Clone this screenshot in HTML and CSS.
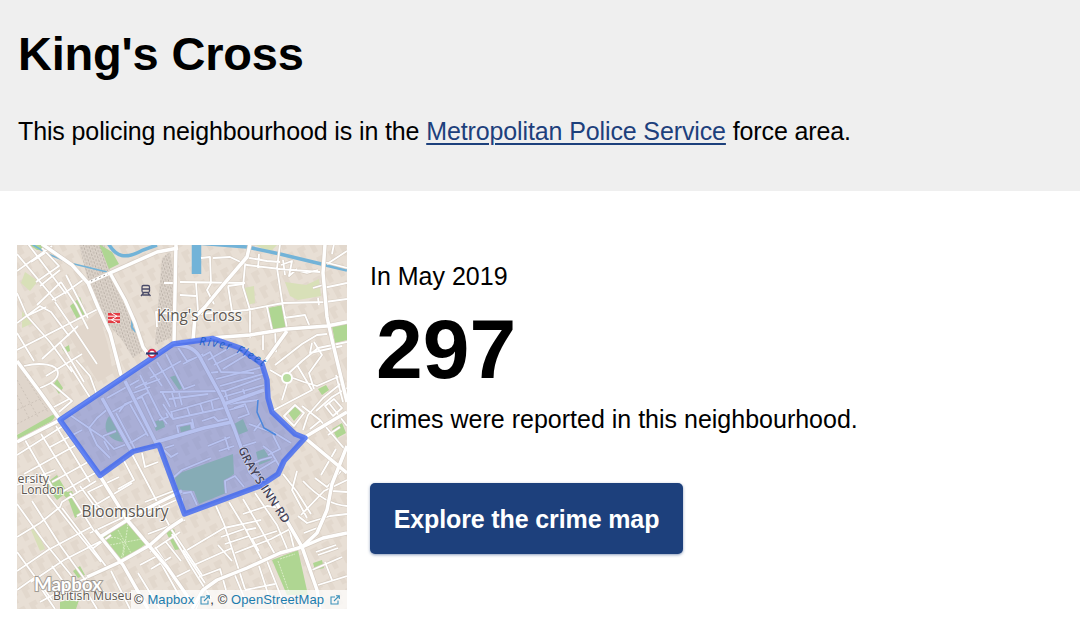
FILE: index.html
```html
<!DOCTYPE html>
<html lang="en">
<head>
  <meta charset="UTF-8">
  <title>King's Cross</title>
  <link rel="stylesheet" href="styles.css">
</head>
<body>
  <header class="page-header">
    <h1>King's Cross</h1>
    <p>This policing neighbourhood is in the <a href="#">Metropolitan Police Service</a> force area.</p>
  </header>

  <div class="main-contents">
    <div class="map">
      <svg class="map-tiles" viewBox="17 245 330 364">
        <defs>
          <pattern id="rail" width="5" height="4" patternUnits="userSpaceOnUse" patternTransform="rotate(-18)">
            <rect width="5" height="4" fill="#dcd3ca"/>
            <path d="M1 0V2.500M3.500 1.500V4" stroke="#b0a79e" stroke-width=".8"/>
          </pattern>
          <pattern id="blocks" width="13" height="17" patternUnits="userSpaceOnUse" patternTransform="rotate(-28)">
            <path d="M2 2H10V7H7V14H2Z" fill="#dacdc1"/>
          </pattern>

          <!-- side streets -->
          <g id="minor">
            <path d="M17 254 56 301M28 244 66 294M17 271 52 246M31 262 45 253M36 282 59 266 42 248M40 286 60 270M17 293 27 316 50 342 72 372M37 305 61 282M61 282 76 305 88 329M55 302 75 331 97 364M17 323 40 306 51 312 69 336M17 350 98 309M42 359 78 326M27 316 46 307M17 333 34 361M52 300 66 292 83 280M66 275 88 318M60 342 84 382M46 376 82 354"/>
            <path d="M24 366C40 362 58 364 58 373C58 380 50 384 40 388M70 366 91 399M51 383 72 401 59 412M76 360 90 376 97 395M117 365 122 380M52 408 69 399"/>
            <path d="M25 440 55 492M41 434 77 492M56 426 90 482M66 424 17 455M78 444 24 474M88 462 52 482M95 473 62 492M82 430 50 447M17 485 55 470"/>
            <path d="M17 504 45 543 75 580M32 501 60 545 91 588M45 492 75 530 101 562M62 508 90 545 108 569M17 537 40 523 60 507 62 502 96 481M17 571 48 550 91 527M31 582 64 560 103 540M17 590 34 578 55 609M40 602 75 583 107 569M70 493 94 531M80 486 103 518M52 566 77 601M17 552 52 600M80 581 97 609M111 571 130 609M104 513 88 492 119 477M77 516 132 483M90 533 141 509M92 549 111 535"/>
            <path d="M132 454 152 492 171 529 202 575M142 453 145 467 158 462M123 459 134 480 118 489M104 482 121 510 147 542M145 502 176 490M139 517 176 500M148 534 185 520M150 552 180 532M166 542 181 561M172 534 192 568 211 598M140 565 157 556 181 599M155 547 184 590M138 573 160 609M151 569 171 557M172 579 190 570"/>
            <path d="M216 506 224 524 236 561 245 589M229 502 246 530 262 560M243 499 259 526 276 556M255 493 277 525 288 551M265 490 287 520 294 548M187 550 224 528 261 520M221 537 244 529M225 544 249 536M235 553 271 539 290 529M194 565 232 548M183 550 195 568 205 583M218 545 232 561M243 514 267 506 282 508M246 530 256 528M259 551 252 539 277 531M203 590 196 609M234 573 246 602M259 566 273 609M267 561 286 609M245 590 275 584M199 577 220 569 226 590M312 570 342 557M318 585 347 576M325 562 332 580M316 552 336 545M318 555 338 548"/>
            <path d="M298 516 307 523 330 516 347 514M307 518 292 490 297 471M303 481C316 495 330 505 347 506M332 491 347 492M301 515 324 491 347 480M283 474 297 492 311 514M304 533 317 528M315 478 327 487 341 471M321 475 336 449"/>
            <path d="M272 411 312 390 297 365M287 384 282 400M293 378 304 382 317 386 340 376M289 373 302 361 318 348 347 342M270 370 282 377M314 389 309 373 322 355 314 342M275 365 302 344 317 335 327 334M312 343 310 353 342 346M303 430 308 415 323 398 343 382M302 406 320 420 347 452M316 411 332 397 347 388M329 403 340 417 347 426M310 429 320 421M284 416 295 405 304 413 294 426ZM325 406 334 399 342 408 333 416ZM328 435 340 427M336 375 343 402"/>
            <path d="M280 244 277 268 283 307 287 328M213 258 230 257 247 265 280 269 320 272M201 258 210 257 211 283 207 290 214 304M228 286 232 311M245 265 243 287 250 310 250 338M228 286 243 284M196 296 180 295M180 282 245 283M196 283 198 311M200 314 247 310 283 303 325 302 347 299M263 334 263 350M275 330 276 352M267 307 272 330M244 257 267 261 280 262M259 254 258 268M283 260 285 275M281 265 292 261 289 276 297 269M295 270 307 273 318 270M323 288 347 283M313 288 323 285M334 244 332 254M327 264 347 251M324 262 347 268M284 318 305 315 310 327M318 298 319 305"/>
            <path d="M174 283 164 283M157 327 156 312 172 314"/>
          </g>

          <!-- streets that lie inside the boundary -->
          <g id="inner">
            <path d="M70 415 89 428 97 445 110 458M109 408 97 418 89 428 104 438 114 449 132 442 147 433M112 412 149 392M107 398 139 380M103 436 116 431M104 441 109 450M116 413 135 449M119 412 125 404 142 397 156 427M130 404 148 436M135 388 147 382M140 375 160 415 167 424M133 393 150 387M157 362 175 392M166 354 184 389 195 385M149 367 162 386M150 378 165 370 181 361"/>
            <path d="M160 392 225 391 261 378M162 392 170 407M172 393 176 407M179 393 182 405M171 412 264 385M171 411 173 419 224 408M187 407 190 416M200 403 203 412M211 400 213 409M163 404 172 418M159 420 168 417 166 413M144 385 160 379M169 399 208 394"/>
            <path d="M177 346 187 361 200 356M183 364 203 354M201 357 210 352 221 372 254 373M208 360 229 348M214 365 240 352M223 369 246 355M216 379 263 367M220 386 263 374M208 373 218 372M225 391 228 402 242 398M243 389 246 399M229 404 258 400M229 410 244 406"/>
            <path d="M234 408 245 404 249 414 238 418M202 421 214 417 218 421 231 418M192 419 195 433M177 426 191 423 193 432 179 435ZM164 450 171 457 178 453M165 448 174 445M208 446 230 437M219 451 234 446M225 437 229 450M240 447 256 442M249 424 260 428 274 433M273 435 280 449 268 455M262 421 254 431M273 432 291 443M263 446 271 452 280 467M248 466 261 460 272 457M254 473 276 460M174 477 182 470 211 458M226 493 225 481 235 476 244 487M179 494 191 492 197 505M183 508 182 498"/>
          </g>

          <g id="major">
            <path d="M42 244 72 265 88 283 98 307 110 333 121 375"/>
            <path d="M88 283 110 273 157 252 178 248"/>
            <path d="M110 273 125 300 135 323 143 347 150 357"/>
            <path d="M250 244 247 257 223 285 205 307 195 317 193 340M176 244 174 344"/>
            <path d="M325 244 323 273 327 317 332 340 347 402"/>
            <path d="M180 342 210 338 250 335 287 329 327 326 347 322M287 331 264 363"/>
            <path d="M17 361 40 392 60 420 100 476 128 521 167 567 190 600"/>
            <path d="M17 442 60 420 173 344"/>
            <path d="M95 530 123 565 148 609M87 577 120 562 150 545 168 529 183 519M100 537 140 512 182 491"/>
            <path d="M192 609 203 590 217 580 247 568 280 553 302 547 323 538 347 533"/>
            <path d="M172 345C190 345 197 350 202 361L222 398 234 428 250 472 270 492 302 547 317 590 320 609M302 547 317 533 327 510 332 484 347 446M305 438 347 473M305 437 347 412"/>
            <path d="M102 398 132 452M125 381 157 445M156 442 204 428 232 422M224 404 264 390"/>
          </g>
        </defs>

        <rect x="17" y="245" width="330" height="364" fill="#e8dfd5"/>
        <rect x="17" y="245" width="330" height="364" fill="url(#blocks)" opacity=".4"/>
        <path d="M79 244H104L110 270 88 281ZM90 283 110 275 132 321 143 351 133 358 122 340 107 323ZM162 258 170 252 175 282 172 337 155 345 158 306Z" fill="url(#rail)"/>
        <path d="M17 363 40 395 56 417 17 434Z" fill="#dfd5cb"/>
        <path d="M69 336 98 312 108 345 113 373 98 382Z" fill="#e1d6cb"/>
        <path d="M17 380 38 417M17 395 30 420M25 376 48 412M17 410 42 398M17 424 50 407" fill="none" stroke="#cdc3b9" stroke-dasharray="2 2"/>

        <!-- parks and squares -->
        <g fill="#afd692">
          <path d="M28 244H41L49 251 37 250ZM99 244 112 252 119 264 109 269ZM70 306 80 297 86 315 77 319ZM62 349 69 345 70 351 65 353Z"/>
          <path d="M268 308 283 305 287 327 273 330ZM332 326 347 323V340L335 343Z"/>
          <path d="M102 538 128 522 147 543 120 563ZM272 560 298 550 308 595 287 595ZM166 532 174 529 181 549 175 550Z"/>
          <path d="M62 493 72 491 81 514 75 518 69 501ZM73 571 80 566 85 575 78 578ZM60 602 80 597 76 609H60ZM45 484 57 475 67 492 57 500Z"/>
          <path d="M53 385 57 379 63 388 59 394ZM17 435 54 414 51 410 57 414 52 421 18 439ZM318 389 326 385 329 390 322 395ZM332 429 342 423 346 433 337 438Z"/>
          <path d="M313 563 322 560 324 568 315 570ZM287 411 296 406 301 413 294 421Z"/>
        </g>
        <g fill="#d8e0b8">
          <path d="M244 288 254 286 255 303 247 305ZM285 282 306 285 319 279 321 296 298 300 290 296ZM25 272 38 281 30 291 21 283ZM22 311 33 323 22 328ZM31 530 36 527 45 549 40 551ZM253 244H278L270 252Z"/>
        </g>
        <g fill="#b0dba2">
          <path d="M110 415C102 424 104 440 123 442ZM174 475 233 454 234 474 224 482 226 493 199 504 194 491 178 490ZM170 377 177 375 184 387 179 390ZM153 422 163 419 165 427 156 431ZM234 424 243 419 248 431 238 435ZM256 452 264 449 271 460 259 465ZM180 427 190 425 191 431 181 433Z"/>
        </g>
        <path d="M105 539C122 534 128 542 120 561M110 545 142 539M118 530 131 553M128 524 123 558M278 561 289 592M280 559 295 554" fill="none" stroke="#d9ecc5" stroke-dasharray="2 1"/>

        <!-- water -->
        <g fill="none" stroke="#72b3d8">
          <path d="M30 243 48 254 70 263 107 272" stroke-width="1.600"/>
          <path d="M108 243C116 257 125 260 143 250L157 245M196 243 247 247 280 254 313 262 347 270" stroke-width="3.500"/>
          <path d="M196.500 244V274" stroke-width="9.500"/>
          <path d="M129 310 132 318 132 328 136 332" stroke-width="1.800"/>
        </g>

        <g class="casing"><use href="#minor"/><use href="#inner"/></g>
        <g class="street"><use href="#minor"/><use href="#inner"/></g>
        <use href="#major" class="road-casing"/>
        <use href="#major" class="road"/>
        <circle cx="287" cy="378" r="5" fill="#b9dca0" stroke="#fff" stroke-width="2"/>
        <path d="M91 281 108 274" stroke="#8d8781" stroke-width="1" stroke-dasharray="1.500 3"/>
        <path d="M258 400 257 412 264 428 276 435" fill="none" stroke="#4f9fe0" stroke-width="1.500"/>

        <!-- neighbourhood boundary -->
        <path class="boundary" d="M60 420 100 475.500 133 451.500 159 445 184.500 514 260 486 278 474 284 461 305 438 295 434 272 412 268 398 267 380 262 364 240 348 213 338.500 173 344Z"/>

        <!-- stations -->
        <g fill="none" stroke="#4a4b68" stroke-width="1.300">
          <rect x="142" y="285.500" width="7.500" height="7" rx="1.500"/>
          <path d="M142 289H149.500M143.500 293 141 296M148 293 150.500 296M142.500 295H149"/>
        </g>
        <rect x="108" y="313" width="12" height="10" fill="#e33b43"/>
        <path d="M108 316.200H120M108 319.800H120M111.500 313 117 316.200 111.500 319.800 117 323" fill="none" stroke="#fff" stroke-width="1"/>
        <circle cx="152" cy="353.500" r="3.700" fill="#fff" stroke="#d9304f" stroke-width="2"/>
        <path d="M146 353.500H158" stroke="#2a3a72" stroke-width="2.200"/>

        <g class="labels">
          <text x="157" y="320.500" textLength="85" lengthAdjust="spacingAndGlyphs">King's Cross</text>
          <text x="81.500" y="517" textLength="87" lengthAdjust="spacingAndGlyphs">Bloomsbury</text>
          <g class="small">
            <text x="17.500" y="482.500" textLength="31.500" lengthAdjust="spacingAndGlyphs">ersity</text>
            <text x="21" y="494" textLength="43" lengthAdjust="spacingAndGlyphs">London</text>
            <text x="53" y="599.500" textLength="79" lengthAdjust="spacingAndGlyphs">British Museu</text>
          </g>
        </g>
        <path id="fleet" d="M199 345Q233 347 262 366L276 376" fill="none"/>
        <text class="river"><textPath href="#fleet" textLength="68">River Fleet</textPath></text>
        <path id="grays" d="M238 449Q246 468 260 488L290 534" fill="none"/>
        <text class="street-name"><textPath href="#grays" textLength="88">GRAY'S INN RD</textPath></text>
        <text class="wordmark" x="34" y="590.500" textLength="68">Mapbox</text>
      </svg>
      <div class="attribution">
        © <a href="#">Mapbox<svg class="ext" viewBox="0 0 10 10"><path d="M5 2H1V9H8V5.500M4 6 9 1M6 .700H9.300V4"/></svg></a>, © <a href="#">OpenStreetMap<svg class="ext" viewBox="0 0 10 10"><path d="M5 2H1V9H8V5.500M4 6 9 1M6 .700H9.300V4"/></svg></a>
      </div>
    </div>

    <div class="crimes">
      <p>In May 2019</p>
      <div class="count">297</div>
      <p>crimes were reported in this neighbourhood.</p>
      <a class="button" href="#">Explore the crime map</a>
    </div>
  </div>
</body>
</html>
```

FILE: styles.css
```css
* {
  box-sizing: border-box;
}
body {
  margin: 0;
  font-family: "Liberation Sans", helvetica, arial, sans-serif;
  font-size: 25px;
  line-height: 30px;
  color: #000;
  background-color: #fff;
}
h1, p {
  margin: 0;
}
.page-header {
  height: 191px;
  padding: 26px 18px 0;
  background-color: #efefef;
}
h1 {
  font-size: 47px;
  line-height: 56px;
  letter-spacing: -0.2px;
}
.page-header p {
  margin-top: 34px;
  letter-spacing: -0.12px;
}
.page-header a {
  color: #1d407c;
  text-decoration-thickness: 2px;
  text-underline-offset: 3px;
}
.main-contents {
  display: flex;
  gap: 23px;
  padding: 54px 17px 0;
}
.map {
  position: relative;
  flex: none;
  width: 330px;
  height: 364px;
  overflow: hidden;
}
.map-tiles {
  display: block;
  width: 330px;
  height: 364px;
}
.casing, .street, .road, .road-casing {
  fill: none;
  stroke-linejoin: round;
}
.casing {
  stroke: #d6ccc1;
  stroke-width: 3;
}
.street {
  stroke: #fff;
  stroke-width: 1.8;
}
.road-casing {
  stroke: #d6ccc2;
  stroke-width: 4.8;
}
.road {
  stroke: #fff;
  stroke-width: 3.5;
}
.boundary {
  fill: rgba(65, 95, 215, 0.38);
  stroke: rgba(65, 105, 240, 0.82);
  stroke-width: 5.4;
  stroke-linejoin: round;
}
.labels {
  font-family: "Open Sans", sans-serif;
  font-size: 15.5px;
  fill: #5d5751;
  stroke: rgba(255, 255, 255, 0.8);
  stroke-width: 2px;
  paint-order: stroke;
}
.labels .small {
  font-size: 12px;
}
.river {
  font: italic 11.5px "Open Sans", sans-serif;
  fill: #2360c8;
}
.street-name {
  font: 600 12px "Open Sans", sans-serif;
  fill: #454358;
  stroke: rgba(255, 255, 255, 0.5);
  stroke-width: 1px;
  paint-order: stroke;
}
.wordmark {
  font: bold 19px Lato, sans-serif;
  fill: #fff;
  stroke: #a19b94;
  stroke-width: 2px;
  paint-order: stroke;
}
.attribution {
  position: absolute;
  right: 0;
  bottom: 0;
  width: 216px;
  height: 19px;
  padding-left: 3px;
  font-size: 13px;
  line-height: 20px;
  letter-spacing: 0.1px;
  white-space: nowrap;
  color: #333;
  background-color: rgba(255, 255, 255, 0.72);
}
.attribution a {
  color: #1c7cad;
  text-decoration: none;
}
.ext {
  width: 10px;
  height: 10px;
  margin-left: 6px;
  vertical-align: -1px;
  fill: none;
  stroke: #3c91ba;
  stroke-width: 1.1;
}
.crimes {
  padding-top: 16px;
}
.count {
  margin: 13px 0 10px 6px;
  font-size: 84px;
  font-weight: bold;
  line-height: 90px;
}
.button {
  display: block;
  width: 313px;
  height: 71px;
  margin-top: 49px;
  border-radius: 5px;
  font-weight: bold;
  line-height: 72px;
  letter-spacing: -0.12px;
  text-align: center;
  text-decoration: none;
  color: #fff;
  background-color: #1d407c;
  box-shadow: 0 1px 3px rgba(29, 64, 124, 0.5);
}
```
